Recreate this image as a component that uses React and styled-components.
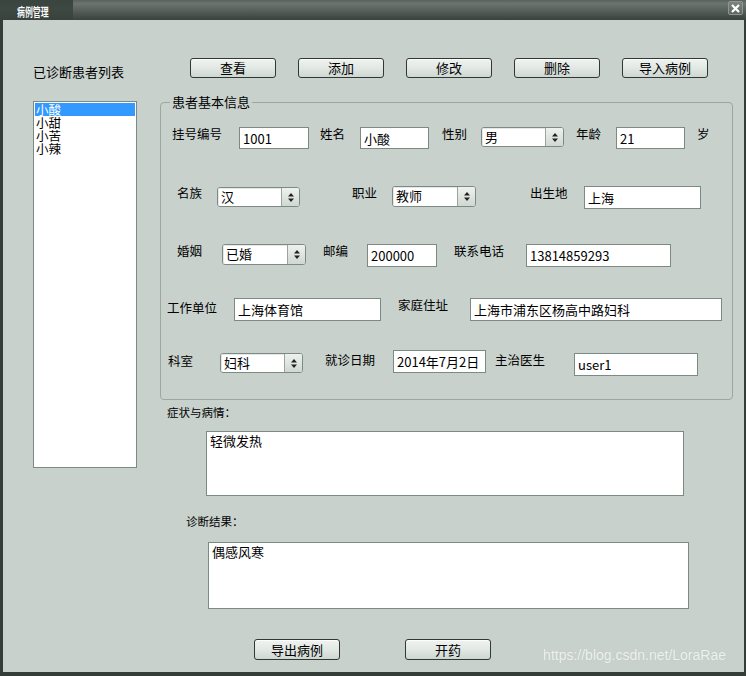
import React from "react";
import styled, { createGlobalStyle } from "styled-components";

const GlobalStyle = createGlobalStyle`
  html, body {
    margin: 0;
    padding: 0;
    background: #343d38;
  }
  body {
    font-family: "Noto Sans CJK SC", "Liberation Sans", sans-serif;
    color: #000;
  }
`;

const Window = styled.div`
  width: 746px;
  height: 676px;
  display: flex;
  flex-direction: column;
  background: #343d38;
  overflow: hidden;
`;

const TitleBar = styled.div`
  height: 20px;
  flex: none;
  display: flex;
  background: linear-gradient(#59625d 0, #6c7470 18%, #5b645f 45%, #39423d 100%);
`;

const TitleTab = styled.div`
  width: 73px;
  box-sizing: border-box;
  padding-left: 17px;
  display: flex;
  align-items: center;
  background: linear-gradient(#3b4540 0, #3e4843 45%, #39423d 100%);
`;

const TitleText = styled.span`
  margin-top: 4px;
  color: #fff;
  font-size: 12px;
  font-weight: bold;
  line-height: 12px;
  white-space: nowrap;
  transform: scaleX(0.66);
  transform-origin: left center;
  text-shadow: 0 0 1px #1c2420;
`;

const CloseButton = styled.div`
  margin: 1px 3px 0 auto;
  width: 15px;
  height: 14px;
  box-sizing: border-box;
  border: 1px solid #8e9691;
  border-radius: 2px;
  background: linear-gradient(#7d8581, #5e6762);
  display: flex;
  align-items: center;
  justify-content: center;
`;

const Body = styled.div`
  position: relative;
  flex: 1;
  margin: 0 2px 4px 3px;
  background: #c8d1cc;
  display: flex;
`;

const LeftPane = styled.div`
  margin-left: 30px;
  width: 104px;
  display: flex;
  flex-direction: column;
`;

const PaneTitle = styled.div`
  margin-top: 45px;
  font-size: 13px;
  line-height: 14px;
  white-space: nowrap;
`;

const ListBox = styled.div`
  margin-top: 22px;
  height: 367px;
  box-sizing: border-box;
  border: 1px solid #7b8b83;
  background: #fff;
  padding: 1px;
`;

const ListItem = styled.div`
  height: 13px;
  padding-left: 1px;
  font-size: 12.5px;
  line-height: 13px;
  background: ${(p) => (p.$selected ? "#3399ff" : "transparent")};
  color: ${(p) => (p.$selected ? "#fff" : "#000")};
`;

const RightPane = styled.div`
  margin-left: 23px;
  width: 574px;
  display: flex;
  flex-direction: column;
`;

const ButtonBar = styled.div`
  display: flex;
  margin-top: ${(p) => p.$mt}px;
  margin-left: ${(p) => p.$ml}px;
  gap: ${(p) => p.$gap}px;
`;

const Button = styled.button`
  width: 86px;
  height: ${(p) => p.$h || 20}px;
  padding: 0;
  box-sizing: border-box;
  border: 1px solid #2f3833;
  border-radius: 3px;
  background: linear-gradient(#f0f3f1 0, #e2e8e4 50%, #cfd7d2 100%);
  box-shadow: inset 0 1px 0 #fbfcfb;
  font-family: "Noto Sans CJK SC", sans-serif;
  font-size: 13px;
  line-height: 16px;
  color: #000;
`;

const GroupBox = styled.fieldset`
  margin: 17px 0 0;
  padding: 0;
  width: 573px;
  box-sizing: border-box;
  min-inline-size: auto;
  border: 1px solid #9ca7a0;
  border-radius: 4px;
`;

const GroupTitle = styled.legend`
  margin-left: 9px;
  padding: 0 2px;
  font-size: 13px;
  line-height: 14px;
`;

const FormArea = styled.div`
  padding-top: 18px;
`;

const FormRow = styled.div`
  height: ${(p) => p.$h}px;
  display: flex;
  align-items: flex-start;
`;

const Label = styled.span`
  flex: none;
  width: ${(p) => p.$w}px;
  margin-left: ${(p) => p.$ml}px;
  margin-top: ${(p) => p.$mt || 0}px;
  font-size: 12.5px;
  line-height: 14px;
  white-space: nowrap;
`;

const TextBox = styled.input`
  flex: none;
  width: ${(p) => p.$w}px;
  height: ${(p) => p.$h || 23}px;
  margin: ${(p) => p.$mt || 0}px 0 0 ${(p) => p.$ml}px;
  padding: 0 3px;
  box-sizing: border-box;
  border: 1px solid #7b8b83;
  background: #fff;
  outline: none;
  font-family: "Noto Sans CJK SC", sans-serif;
  font-size: 13px;
  color: #000;
`;

const SelectBox = styled.div`
  flex: none;
  display: flex;
  width: ${(p) => p.$w}px;
  height: ${(p) => p.$h || 20}px;
  margin: ${(p) => p.$mt || 0}px 0 0 ${(p) => p.$ml}px;
  box-sizing: border-box;
  border: 1px solid #7d8a84;
  border-radius: 3px;
  background: #fff;
  overflow: hidden;
`;

const SelectValue = styled.span`
  flex: 1;
  padding-left: 3px;
  font-size: 13px;
  line-height: 18px;
  white-space: nowrap;
  box-shadow: inset 1px 1px 0 #e4e8e6;
`;

const SelectArrow = styled.span`
  width: 17px;
  border-left: 1px solid #9aa59f;
  background: linear-gradient(#eef2ef, #d0d8d3);
  display: flex;
  align-items: center;
  justify-content: center;
`;

const SectionLabel = styled.div`
  margin: ${(p) => p.$mt}px 0 0 ${(p) => p.$ml}px;
  font-size: 11.5px;
  line-height: 14px;
  white-space: nowrap;
`;

const MemoBox = styled.textarea`
  width: ${(p) => p.$w}px;
  height: ${(p) => p.$h}px;
  margin: ${(p) => p.$mt}px 0 0 ${(p) => p.$ml}px;
  padding: 1px 3px;
  box-sizing: border-box;
  border: 1px solid #7b8b83;
  background: #fff;
  resize: none;
  outline: none;
  font-family: "Noto Sans CJK SC", sans-serif;
  font-size: 13px;
  line-height: 15px;
  color: #000;
`;

const Watermark = styled.div`
  position: absolute;
  right: 18px;
  bottom: 9px;
  font-family: "Liberation Sans", Arial, sans-serif;
  font-size: 14px;
  line-height: 16px;
  color: #eef1ef;
  text-shadow: 0 0 1px #b7c0bb;
`;

function Field({ label, value, ml, lw, lmt, w, h, mt, tml }) {
  return (
    <>
      <Label $ml={ml} $w={lw} $mt={lmt}>
        {label}
      </Label>
      <TextBox readOnly value={value} $ml={tml} $w={w} $h={h} $mt={mt} />
    </>
  );
}

function Choice({ label, value, ml, lw, lmt, w, h, mt, tml }) {
  return (
    <>
      <Label $ml={ml} $w={lw} $mt={lmt}>
        {label}
      </Label>
      <SelectBox $ml={tml} $w={w} $h={h} $mt={mt}>
        <SelectValue>{value}</SelectValue>
        <SelectArrow>
          <svg width="6" height="9" viewBox="0 0 6 9">
            <path d="M3 0 L6 3.5 L0 3.5 Z M0 5.5 L6 5.5 L3 9 Z" fill="#222" />
          </svg>
        </SelectArrow>
      </SelectBox>
    </>
  );
}

const patients = ["小酸", "小甜", "小苦", "小辣"];
const actions = ["查看", "添加", "修改", "删除", "导入病例"];

export default function App() {
  return (
    <Window>
      <GlobalStyle />
      <TitleBar>
        <TitleTab>
          <TitleText>病例管理</TitleText>
        </TitleTab>
        <CloseButton>
          <svg width="9" height="9" viewBox="0 0 9 9">
            <path d="M1 1 L8 8 M8 1 L1 8" stroke="#fff" strokeWidth="2.2" />
          </svg>
        </CloseButton>
      </TitleBar>
      <Body>
        <LeftPane>
          <PaneTitle>已诊断患者列表</PaneTitle>
          <ListBox>
            {patients.map((name, i) => (
              <ListItem key={name} $selected={i === 0}>
                {name}
              </ListItem>
            ))}
          </ListBox>
        </LeftPane>
        <RightPane>
          <ButtonBar $mt={38} $ml={30} $gap={22}>
            {actions.map((a) => (
              <Button key={a}>{a}</Button>
            ))}
          </ButtonBar>
          <GroupBox>
            <GroupTitle>患者基本信息</GroupTitle>
            <FormArea>
              <FormRow $h={59}>
                <Field label="挂号编号" value="1001" ml={11} lw={50} tml={17} w={70} h={22} />
                <Field label="姓名" value="小酸" ml={11} lw={26} tml={14} w={69} h={22} />
                <Choice label="性别" value="男" ml={13} lw={26} tml={13} w={83} h={20} />
                <Field label="年龄" value="21" ml={12} lw={26} tml={14} w={69} h={22} />
                <Label $ml={12} $w={13}>
                  岁
                </Label>
              </FormRow>
              <FormRow $h={58}>
                <Choice label="名族" value="汉" ml={16} lw={26} tml={14} w={83} h={20} mt={1} />
                <Choice label="职业" value="教师" ml={52} lw={26} tml={14} w={84} h={21} />
                <Field label="出生地" value="上海" ml={54} lw={38} tml={16} w={117} />
              </FormRow>
              <FormRow $h={54}>
                <Choice label="婚姻" value="已婚" ml={16} lw={26} tml={19} w={84} h={21} />
                <Field label="邮编" value="200000" ml={17} lw={26} tml={18} w={70} />
                <Field label="联系电话" value="13814859293" ml={17} lw={50} tml={22} w={145} />
              </FormRow>
              <FormRow $h={52}>
                <Field label="工作单位" value="上海体育馆" ml={6} lw={50} lmt={3} tml={17} w={147} />
                <Field label="家庭住址" value="上海市浦东区杨高中路妇科" ml={17} lw={50} tml={22} w={252} />
              </FormRow>
              <FormRow $h={49}>
                <Choice label="科室" value="妇科" ml={7} lw={26} lmt={4} tml={26} w={83} h={20} mt={3} />
                <Field label="就诊日期" value="2014年7月2日" ml={22} lw={52} lmt={3} tml={16} w={93} />
                <Field label="主治医生" value="user1" ml={9} lw={51} lmt={3} tml={28} w={124} mt={3} />
              </FormRow>
            </FormArea>
          </GroupBox>
          <SectionLabel $mt={5} $ml={7}>
            症状与病情：
          </SectionLabel>
          <MemoBox readOnly value="轻微发热" $mt={12} $ml={46} $w={478} $h={65} />
          <SectionLabel $mt={18} $ml={26}>
            诊断结果：
          </SectionLabel>
          <MemoBox readOnly value="偶感风寒" $mt={14} $ml={48} $w={481} $h={67} />
          <ButtonBar $mt={30} $ml={94} $gap={65}>
            <Button $h={21}>导出病例</Button>
            <Button $h={21}>开药</Button>
          </ButtonBar>
        </RightPane>
        <Watermark>https://blog.csdn.net/LoraRae</Watermark>
      </Body>
    </Window>
  );
}
